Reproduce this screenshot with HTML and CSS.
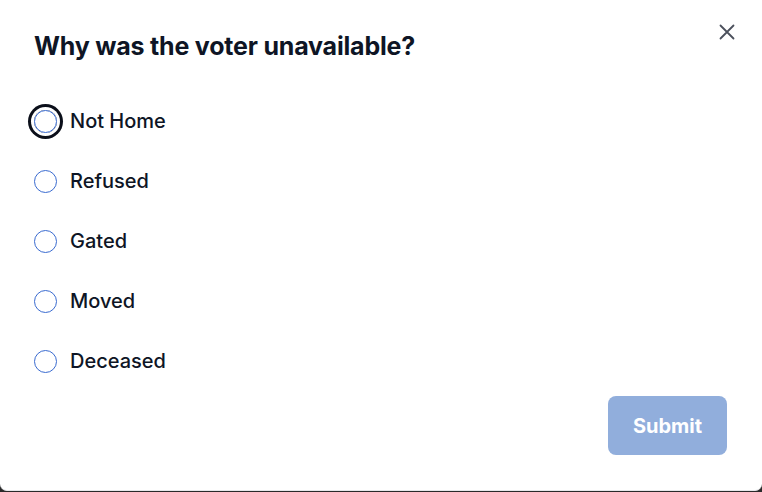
FILE: index.html
```html
<!DOCTYPE html>
<html lang="en">
<head>
<meta charset="utf-8">
<title>Why was the voter unavailable?</title>
<link rel="stylesheet" href="styles.css">
</head>
<body>
<div class="modal">
  <button class="close" aria-label="Close">
    <svg width="16" height="16" viewBox="0 0 16 16"><path d="M1.5 1.5 L14.5 14.5 M14.5 1.5 L1.5 14.5" stroke="#4b505c" stroke-width="1.8" stroke-linecap="round" fill="none"/></svg>
  </button>
  <h1 class="title">Why was the voter unavailable?</h1>
  <div class="options">
    <label class="option"><span class="radio focused"></span><span class="label">Not Home</span></label>
    <label class="option"><span class="radio"></span><span class="label">Refused</span></label>
    <label class="option"><span class="radio"></span><span class="label">Gated</span></label>
    <label class="option"><span class="radio"></span><span class="label">Moved</span></label>
    <label class="option"><span class="radio"></span><span class="label">Deceased</span></label>
  </div>
  <div class="footer">
    <button class="submit">Submit</button>
  </div>
</div>
</body>
</html>
```
FILE: styles.css
```css
html, body {
  margin: 0;
  padding: 0;
}
body {
  background: #2a2a2a;
  width: 762px;
  height: 492px;
  overflow: hidden;
  font-family: Inter, "Noto Sans", sans-serif;
  color: #0e1525;
}
.modal {
  position: relative;
  box-sizing: border-box;
  width: 762px;
  height: 491px;
  background: #ffffff;
  border-bottom: 1px solid #e6e7ea;
  border-radius: 0 0 7px 7px;
  padding: 30px 34px 0 34px;
}
.close {
  position: absolute;
  top: 24px;
  right: 27px;
  width: 16px;
  height: 16px;
  padding: 0;
  border: 0;
  background: none;
  display: flex;
}
.title {
  margin: 0;
  font-size: 25px;
  line-height: 32px;
  font-weight: 700;
  letter-spacing: -0.2px;
}
.options {
  display: flex;
  flex-direction: column;
  margin-top: 29px;
}
.option {
  display: flex;
  align-items: center;
  height: 60px;
  gap: 13px;
}
.radio {
  box-sizing: border-box;
  width: 23px;
  height: 23px;
  border: 1px solid #3a6bd0;
  border-radius: 50%;
  flex: none;
}
.radio.focused {
  box-shadow: 0 0 0 3px #ffffff, 0 0 0 6px #0b0f1a;
}
.label {
  font-size: 20px;
  font-weight: 500;
}
.footer {
  display: flex;
  justify-content: flex-end;
  margin-top: 5px;
  padding-right: 1px;
}
.submit {
  width: 119px;
  height: 59px;
  border: 0;
  border-radius: 8px;
  background: #91aedc;
  color: #ffffff;
  font-family: Inter, "Noto Sans", sans-serif;
  font-size: 20px;
  font-weight: 700;
}
```
